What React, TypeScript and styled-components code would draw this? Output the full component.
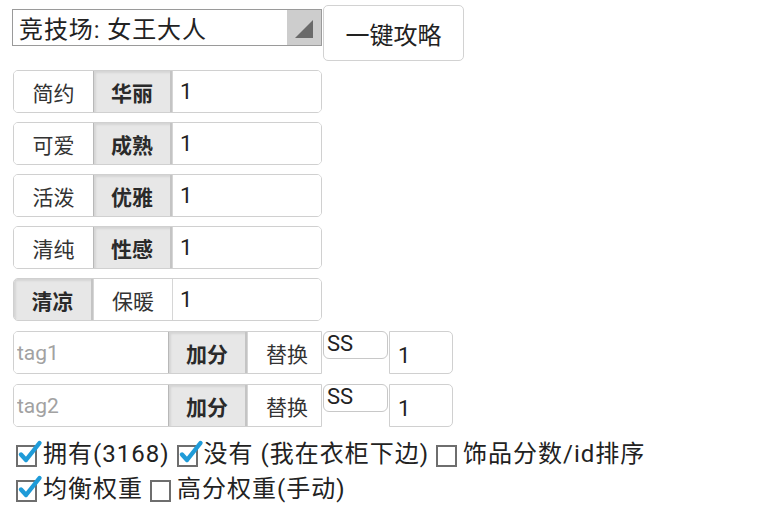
import styled, { createGlobalStyle } from "styled-components";

const GlobalStyle = createGlobalStyle`
  body {
    margin: 0;
    background: #ffffff;
    font-family: Roboto, "Noto Sans CJK SC", "Noto Sans", sans-serif;
    color: #222222;
  }
`;

const styleRows = [
  { left: "简约", right: "华丽", active: "right" },
  { left: "可爱", right: "成熟", active: "right" },
  { left: "活泼", right: "优雅", active: "right" },
  { left: "清纯", right: "性感", active: "right" },
  { left: "清凉", right: "保暖", active: "left" },
];

const CheckIcon = ({ checked }: { checked: boolean }) => (
  <CheckSvg width="28" height="30" viewBox="0 0 28 30">
    <rect x="2" y="9" width="19" height="20" fill="#fff" stroke="#6e6e6e" strokeWidth="2" />
    {checked && (
      <path
        d="M6 17.5 L11 23 L24.5 6"
        fill="none"
        stroke="#1f9bd8"
        strokeWidth="4.4"
        strokeLinecap="round"
        strokeLinejoin="round"
      />
    )}
  </CheckSvg>
);

export default function App() {
  return (
    <Page>
      <GlobalStyle />
      <TopBar>
        <Select>
          <SelectText>竞技场: 女王大人</SelectText>
          <SelectArrow>
            <svg width="20" height="20" viewBox="0 0 20 20">
              <polygon points="1,19 19,19 19,1" fill="#6a6a6a" />
            </svg>
          </SelectArrow>
        </Select>
        <Button>一键攻略</Button>
      </TopBar>

      {styleRows.map((row) => (
        <Row key={row.left}>
          <Segment $active={row.active === "left"} $first>
            {row.left}
          </Segment>
          <Segment $active={row.active === "right"}>{row.right}</Segment>
          <WeightInput defaultValue="1" readOnly />
        </Row>
      ))}

      {["tag1", "tag2"].map((tag) => (
        <TagLine key={tag}>
          <TagGroup>
            <TagInput placeholder={tag} readOnly />
            <Segment $active>加分</Segment>
            <Segment>替换</Segment>
          </TagGroup>
          <RankBox>SS</RankBox>
          <NumberBox defaultValue="1" readOnly />
        </TagLine>
      ))}

      <Options>
        <OptionLine>
          <Option>
            <CheckIcon checked />
            拥有(3168)
          </Option>
          <Option>
            <CheckIcon checked />
            没有 (我在衣柜下边)
          </Option>
          <Option>
            <CheckIcon checked={false} />
            饰品分数/id排序
          </Option>
        </OptionLine>
        <OptionLine>
          <Option>
            <CheckIcon checked />
            均衡权重
          </Option>
          <Option>
            <CheckIcon checked={false} />
            高分权重(手动)
          </Option>
        </OptionLine>
      </Options>
    </Page>
  );
}

const Page = styled.div`
  display: flex;
  flex-direction: column;
  align-items: flex-start;
  padding: 5px 0 0 12px;
  width: 756px;
  height: 505px;
  overflow: hidden;
`;

const TopBar = styled.div`
  display: flex;
  align-items: flex-start;
  gap: 1px;
  margin-bottom: 9px;
`;

const Select = styled.div`
  display: flex;
  margin-top: 4px;
  width: 310px;
  height: 37px;
  box-sizing: border-box;
  border: 1px solid #9a9a9a;
  background: #ffffff;
`;

const SelectText = styled.div`
  flex: 1;
  display: flex;
  align-items: center;
  padding-left: 6px;
  font-size: 24px;
  color: #222222;
  letter-spacing: 0.9px;
`;

const SelectArrow = styled.div`
  width: 34px;
  display: flex;
  align-items: flex-end;
  justify-content: center;
  padding-bottom: 6px;
  box-sizing: border-box;
  background: #cdcdcd;
`;

const Button = styled.div`
  width: 141px;
  height: 56px;
  box-sizing: border-box;
  display: flex;
  align-items: center;
  justify-content: center;
  border: 1px solid #d2d2d2;
  border-radius: 5px;
  background: #ffffff;
  font-size: 24px;
  color: #222222;
`;

const Row = styled.div`
  display: flex;
  width: 309px;
  height: 43px;
  box-sizing: border-box;
  border: 1px solid #d0d0d0;
  border-radius: 5px;
  overflow: hidden;
  margin: 0 0 9px 1px;
`;

const Segment = styled.div<{ $active?: boolean; $first?: boolean }>`
  width: 79px;
  flex-shrink: 0;
  box-sizing: border-box;
  display: flex;
  align-items: center;
  justify-content: center;
  font-size: 21px;
  font-weight: ${(p) => (p.$active ? 700 : 400)};
  color: ${(p) => (p.$active ? "#2a2a2a" : "#333333")};
  background: ${(p) => (p.$active ? "#e7e7e7" : "#ffffff")};
  border-left: 1px solid ${(p) => (p.$active ? "#b8b8b8" : "#d6d6d6")};
  border-right: ${(p) => (p.$active ? "2px solid #c4c4c4" : "none")};
  box-shadow: ${(p) => (p.$active ? "inset 2px 2px 2px rgba(0,0,0,0.08)" : "none")};
  ${(p) => p.$first && "border-left: none;"}
`;

const WeightInput = styled.input`
  flex: 1;
  min-width: 0;
  border: none;
  border-left: 1px solid #d6d6d6;
  outline: none;
  padding: 0 0 0 7px;
  font-family: Roboto, "Noto Sans CJK SC", sans-serif;
  font-size: 22px;
  color: #222222;
  background: #ffffff;
`;

const TagLine = styled.div`
  display: flex;
  align-items: flex-start;
  gap: 1px;
  margin: 1px 0 9px 1px;
`;

const TagGroup = styled.div`
  display: flex;
  width: 309px;
  height: 43px;
  box-sizing: border-box;
  border: 1px solid #d0d0d0;
  border-radius: 5px 0 0 5px;
  overflow: hidden;
`;

const TagInput = styled.input`
  width: 151px;
  flex-shrink: 0;
  border: none;
  outline: none;
  padding: 0 0 0 3px;
  font-family: Roboto, "Noto Sans CJK SC", sans-serif;
  font-size: 21px;
  background: #ffffff;

  &::placeholder {
    color: #a2a2a2;
  }
`;

const RankBox = styled.div`
  width: 65px;
  height: 28px;
  box-sizing: border-box;
  border: 1px solid #c8c8c8;
  border-radius: 6px;
  padding: 0 0 0 3px;
  font-size: 22px;
  line-height: 23px;
  color: #222222;
`;

const NumberBox = styled.input`
  width: 64px;
  height: 43px;
  box-sizing: border-box;
  border: 1px solid #d0d0d0;
  border-radius: 0 5px 5px 0;
  outline: none;
  padding: 6px 0 0 8px;
  font-family: Roboto, "Noto Sans CJK SC", sans-serif;
  font-size: 22px;
  color: #222222;
`;

const Options = styled.div`
  display: flex;
  flex-direction: column;
  margin: -2px 0 0 3px;
`;

const OptionLine = styled.div`
  display: flex;
  align-items: center;
  gap: 6px;
  height: 35px;
`;

const Option = styled.div`
  display: flex;
  align-items: center;
  font-size: 24px;
  letter-spacing: 1px;
  color: #222222;
  white-space: nowrap;
`;

const CheckSvg = styled.svg`
  flex-shrink: 0;
`;
